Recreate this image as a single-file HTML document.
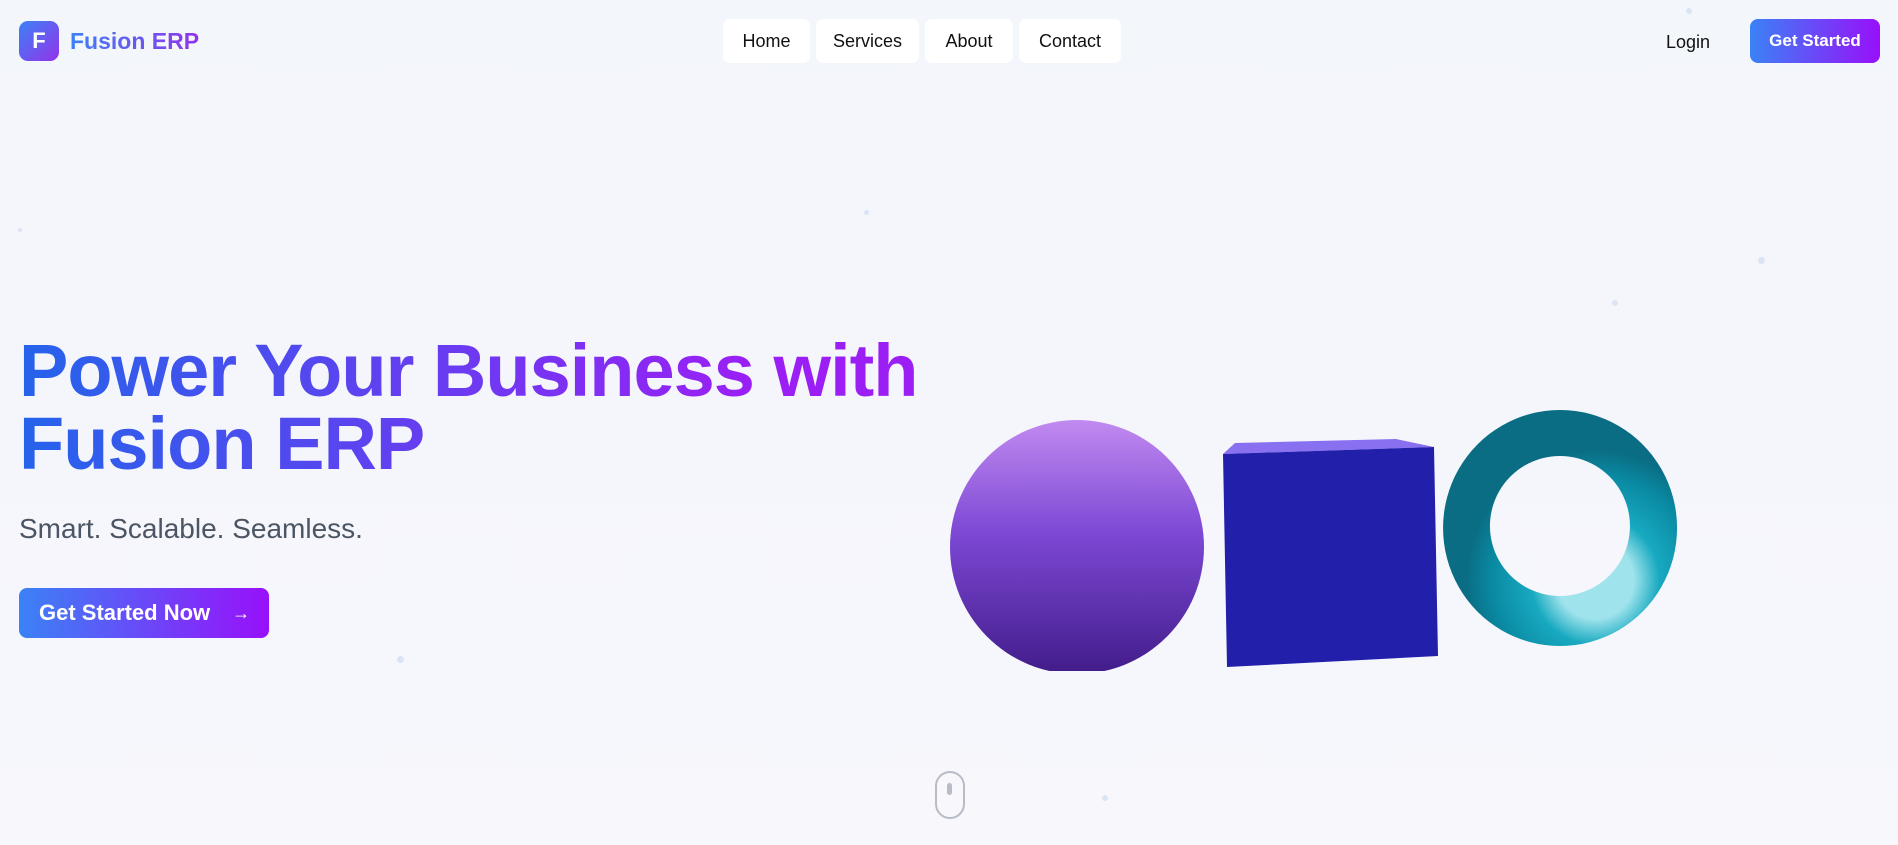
<!DOCTYPE html>
<html><head><meta charset="utf-8"><style>
*{margin:0;padding:0;box-sizing:border-box}
body{width:1898px;height:845px;overflow:hidden;background:linear-gradient(180deg,#f3f6fb,#f7f7fc);font-family:"Liberation Sans",sans-serif;position:relative;color:#111}
.abs{position:absolute}
.logo{left:19px;top:21px;width:40px;height:40px;border-radius:9px;background:linear-gradient(135deg,#3b82f6,#9333ea);color:#fff;font-weight:bold;font-size:22px;display:flex;align-items:center;justify-content:center}
.brand{left:70px;top:28px;font-size:23px;font-weight:bold;background:linear-gradient(90deg,#3b82f6,#9333ea);-webkit-background-clip:text;background-clip:text;color:transparent}
.nav{top:19px;height:44px;background:#fff;border-radius:7px;font-size:18px;display:flex;align-items:center;justify-content:center;color:#111}
.btn{background:linear-gradient(90deg,#3b82f6,#9810fa);color:#fff;font-weight:bold;border-radius:8px;display:flex;align-items:center;justify-content:center}
h1{position:absolute;left:19px;top:334px;font-size:74px;line-height:73px;font-weight:bold;letter-spacing:-1px;background:linear-gradient(90deg,#2563eb,#9b1ff5 82%);-webkit-background-clip:text;background-clip:text;color:transparent;white-space:nowrap}
.sub{left:19px;top:513px;font-size:28px;color:#4b5563}
.dot{position:absolute;border-radius:50%;background:#dbe4f5}
</style></head><body>
<div class="abs logo">F</div>
<div class="abs brand">Fusion ERP</div>
<div class="abs nav" style="left:723px;width:87px">Home</div>
<div class="abs nav" style="left:816px;width:103px">Services</div>
<div class="abs nav" style="left:925px;width:88px">About</div>
<div class="abs nav" style="left:1019px;width:102px">Contact</div>
<div class="abs" style="left:1666px;top:32px;font-size:18px">Login</div>
<div class="abs btn" style="left:1750px;top:19px;width:130px;height:44px;font-size:17px">Get Started</div>
<h1>Power Your Business with<br>Fusion ERP</h1>
<div class="abs sub">Smart. Scalable. Seamless.</div>
<div class="abs btn" style="left:19px;top:588px;width:250px;height:50px;font-size:22px;justify-content:flex-start;padding-left:20px">Get Started Now<span style="margin-left:22px;font-weight:normal;font-size:18px;line-height:1">→</span></div>
<svg class="abs" style="left:0;top:0" width="1898" height="845">
<defs>
<linearGradient id="sp" x1="0" y1="0" x2="0" y2="1"><stop offset="0" stop-color="#c18af0"/><stop offset=".45" stop-color="#7c48d4"/><stop offset="1" stop-color="#421c8a"/></linearGradient>
<radialGradient id="to" cx=".65" cy=".72" r=".55"><stop offset=".3" stop-color="#9fe3ec"/><stop offset=".5" stop-color="#17a9c0"/><stop offset=".8" stop-color="#0a8aa3"/><stop offset="1" stop-color="#0a6d84"/></radialGradient>
<clipPath id="c"><rect x="950" y="400" width="300" height="271"/></clipPath>
</defs>
<circle cx="1077" cy="547" r="127" fill="url(#sp)" clip-path="url(#c)"/>
<polygon points="1223,454 1235,443 1396,439 1434,447" fill="#8870f0"/>
<polygon points="1223,454 1434,447 1438,656 1227,667" fill="#2220ab"/>
<path fill-rule="evenodd" fill="url(#to)" d="M1560,410a117,118 0 1,0 0.1,0zM1560,456a70,70 0 1,1 -0.1,0z"/>
<rect x="936" y="772" width="28" height="46" rx="14" fill="none" stroke="#b8bcc6" stroke-width="2"/>
<rect x="947" y="783" width="5" height="12" rx="2.5" fill="#b8bcc6"/>
</svg>
<div class="dot" style="left:1686px;top:8px;width:6px;height:6px"></div>
<div class="dot" style="left:1758px;top:257px;width:7px;height:7px"></div>
<div class="dot" style="left:397px;top:656px;width:7px;height:7px"></div>
<div class="dot" style="left:1612px;top:300px;width:6px;height:6px"></div>
<div class="dot" style="left:1102px;top:795px;width:6px;height:6px"></div>
<div class="dot" style="left:18px;top:228px;width:4px;height:4px"></div>
<div class="dot" style="left:864px;top:210px;width:5px;height:5px"></div>
</body></html>
